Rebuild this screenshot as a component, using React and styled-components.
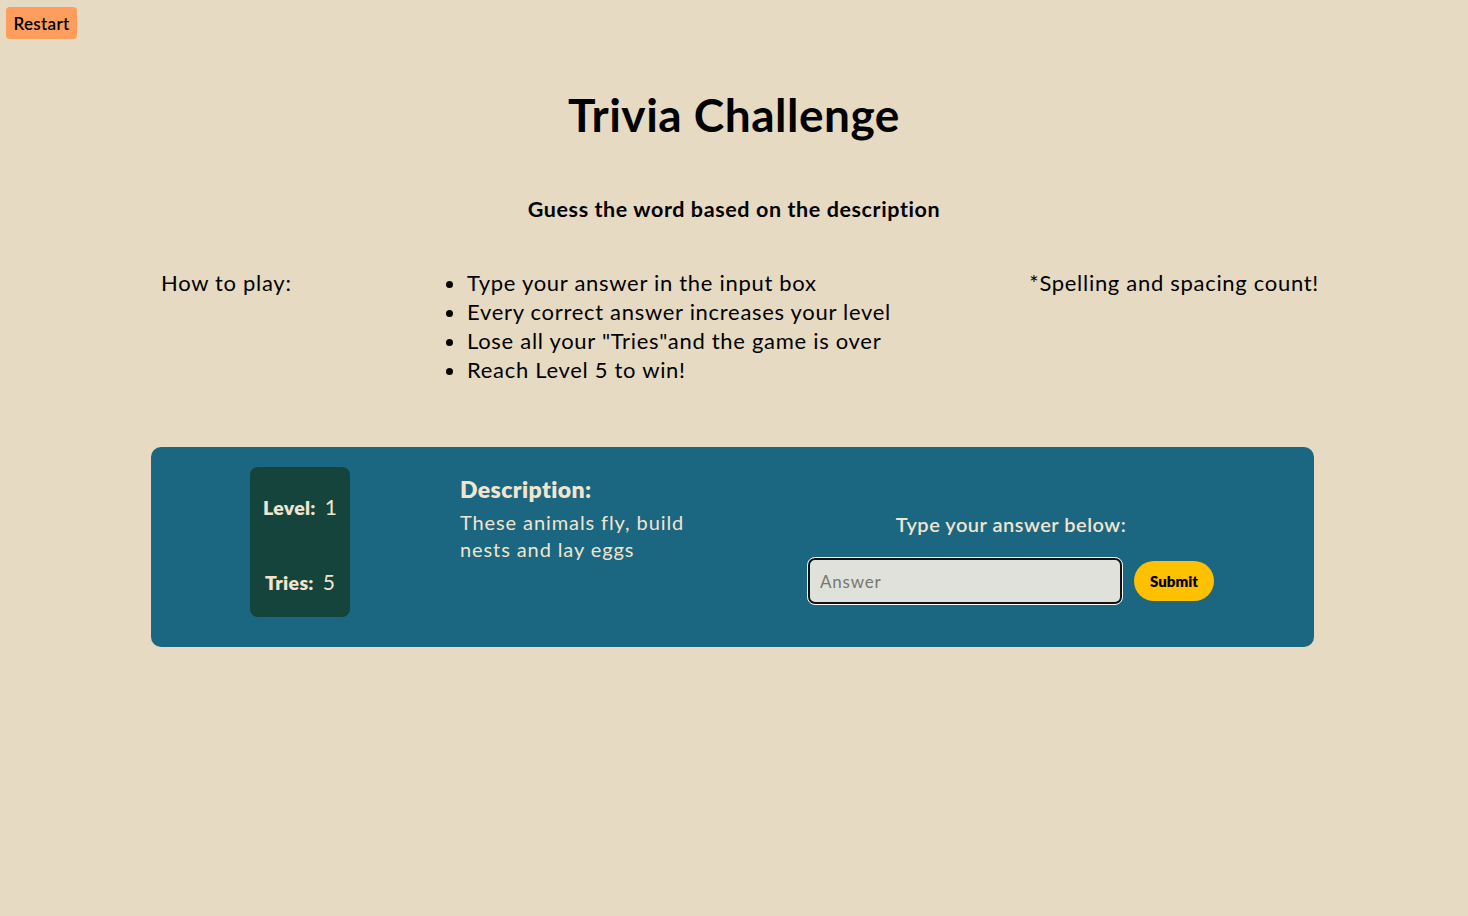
import React from "react";
import styled, { createGlobalStyle } from "styled-components";

const GlobalStyle = createGlobalStyle`
  html, body {
    margin: 0;
    padding: 0;
    background-color: #e6dac3;
  }
  body {
    font-family: Lato, "Noto Sans", sans-serif;
    color: #000000;
    min-height: 916px;
  }
`;

const Page = styled.div`
  position: relative;
  padding-top: 7px;
`;

const TopBar = styled.div`
  padding-left: 6px;
  height: 32px;
`;

const RestartButton = styled.button`
  background-color: #ff9d5c;
  border: none;
  border-radius: 4px;
  height: 32px;
  width: 71px;
  padding: 0;
  font-family: Lato, "Noto Sans", sans-serif;
  font-size: 17px;
  font-weight: 600;
  letter-spacing: 0.3px;
  color: #000;
  cursor: pointer;
`;

const Title = styled.h1`
  margin: 49px 0 0;
  text-align: center;
  font-size: 46px;
  font-weight: 700;
  line-height: 54px;
  letter-spacing: 0.5px;
`;

const Subtitle = styled.h2`
  margin: 53px 0 0;
  text-align: center;
  font-size: 21.5px;
  font-weight: 700;
  line-height: 28px;
  letter-spacing: 0.6px;
`;

const Rules = styled.div`
  display: grid;
  grid-template-columns: 284px auto 1fr;
  width: 1158px;
  margin: 45px 0 0 161px;
  font-size: 22px;
  line-height: 29px;
  letter-spacing: 0.7px;
`;

const RuleLabel = styled.div``;

const RuleList = styled.ul`
  margin: 0;
  padding-left: 22px;
  list-style: disc;
`;

const RuleNote = styled.div`
  justify-self: end;
`;

const Panel = styled.section`
  display: flex;
  align-items: flex-start;
  gap: 110px;
  box-sizing: border-box;
  width: 1163px;
  height: 200px;
  margin: 63px 0 0 151px;
  padding: 20px 0 0 99px;
  background-color: #1b6680;
  border-radius: 10px;
  color: #f1e5cf;
`;

const Stats = styled.div`
  display: flex;
  flex-direction: column;
  justify-content: space-between;
  align-items: center;
  width: 100px;
  height: 150px;
  padding: 27px 0 21px;
  box-sizing: border-box;
  background-color: #15443c;
  border-radius: 8px;
`;

const Stat = styled.div`
  display: flex;
  align-items: baseline;
  gap: 9px;
  line-height: 26px;
`;

const StatLabel = styled.span`
  font-size: 19.5px;
  font-weight: 800;
  letter-spacing: 0.3px;
`;

const StatValue = styled.span`
  font-size: 21px;
`;

const Description = styled.div`
  width: 238px;
  padding-top: 8px;
`;

const DescTitle = styled.h3`
  margin: 0 0 6px;
  font-size: 23px;
  font-weight: 800;
  line-height: 28px;
  letter-spacing: 0.4px;
`;

const DescText = styled.p`
  margin: 0;
  font-size: 20px;
  line-height: 27px;
  letter-spacing: 0.9px;
`;

const Answer = styled.div`
  display: flex;
  flex-direction: column;
  align-items: center;
  width: 406px;
  padding-top: 43px;
`;

const AnswerLabel = styled.div`
  font-size: 20px;
  font-weight: 600;
  line-height: 28px;
  letter-spacing: 0.5px;
`;

const AnswerRow = styled.div`
  display: flex;
  align-items: center;
  gap: 12px;
  margin-top: 20px;
`;

const AnswerInput = styled.input`
  box-sizing: border-box;
  width: 314px;
  height: 46px;
  padding: 0 10px;
  background-color: #e1e1dc;
  border: 2px solid #111;
  border-radius: 7px;
  outline: 1px solid #ffffff;
  font-family: Lato, "Noto Sans", sans-serif;
  font-size: 17px;
  color: #222;

  &::placeholder {
    color: #77776f;
    letter-spacing: 0.8px;
  }
`;

const SubmitButton = styled.button`
  width: 80px;
  height: 40px;
  padding: 0;
  border: none;
  border-radius: 20px;
  background-color: #ffc000;
  font-family: Lato, "Noto Sans", sans-serif;
  font-size: 15px;
  font-weight: 800;
  color: #000;
  cursor: pointer;
`;

export default function App() {
  return (
    <Page>
      <GlobalStyle />
      <TopBar>
        <RestartButton>Restart</RestartButton>
      </TopBar>
      <Title>Trivia Challenge</Title>
      <Subtitle>Guess the word based on the description</Subtitle>
      <Rules>
        <RuleLabel>How to play:</RuleLabel>
        <RuleList>
          <li>Type your answer in the input box</li>
          <li>Every correct answer increases your level</li>
          <li>Lose all your "Tries"and the game is over</li>
          <li>Reach Level 5 to win!</li>
        </RuleList>
        <RuleNote>*Spelling and spacing count!</RuleNote>
      </Rules>
      <Panel>
        <Stats>
          <Stat>
            <StatLabel>Level:</StatLabel>
            <StatValue>1</StatValue>
          </Stat>
          <Stat>
            <StatLabel>Tries:</StatLabel>
            <StatValue>5</StatValue>
          </Stat>
        </Stats>
        <Description>
          <DescTitle>Description:</DescTitle>
          <DescText>These animals fly, build nests and lay eggs</DescText>
        </Description>
        <Answer>
          <AnswerLabel>Type your answer below:</AnswerLabel>
          <AnswerRow>
            <AnswerInput placeholder="Answer" autoFocus />
            <SubmitButton>Submit</SubmitButton>
          </AnswerRow>
        </Answer>
      </Panel>
    </Page>
  );
}
